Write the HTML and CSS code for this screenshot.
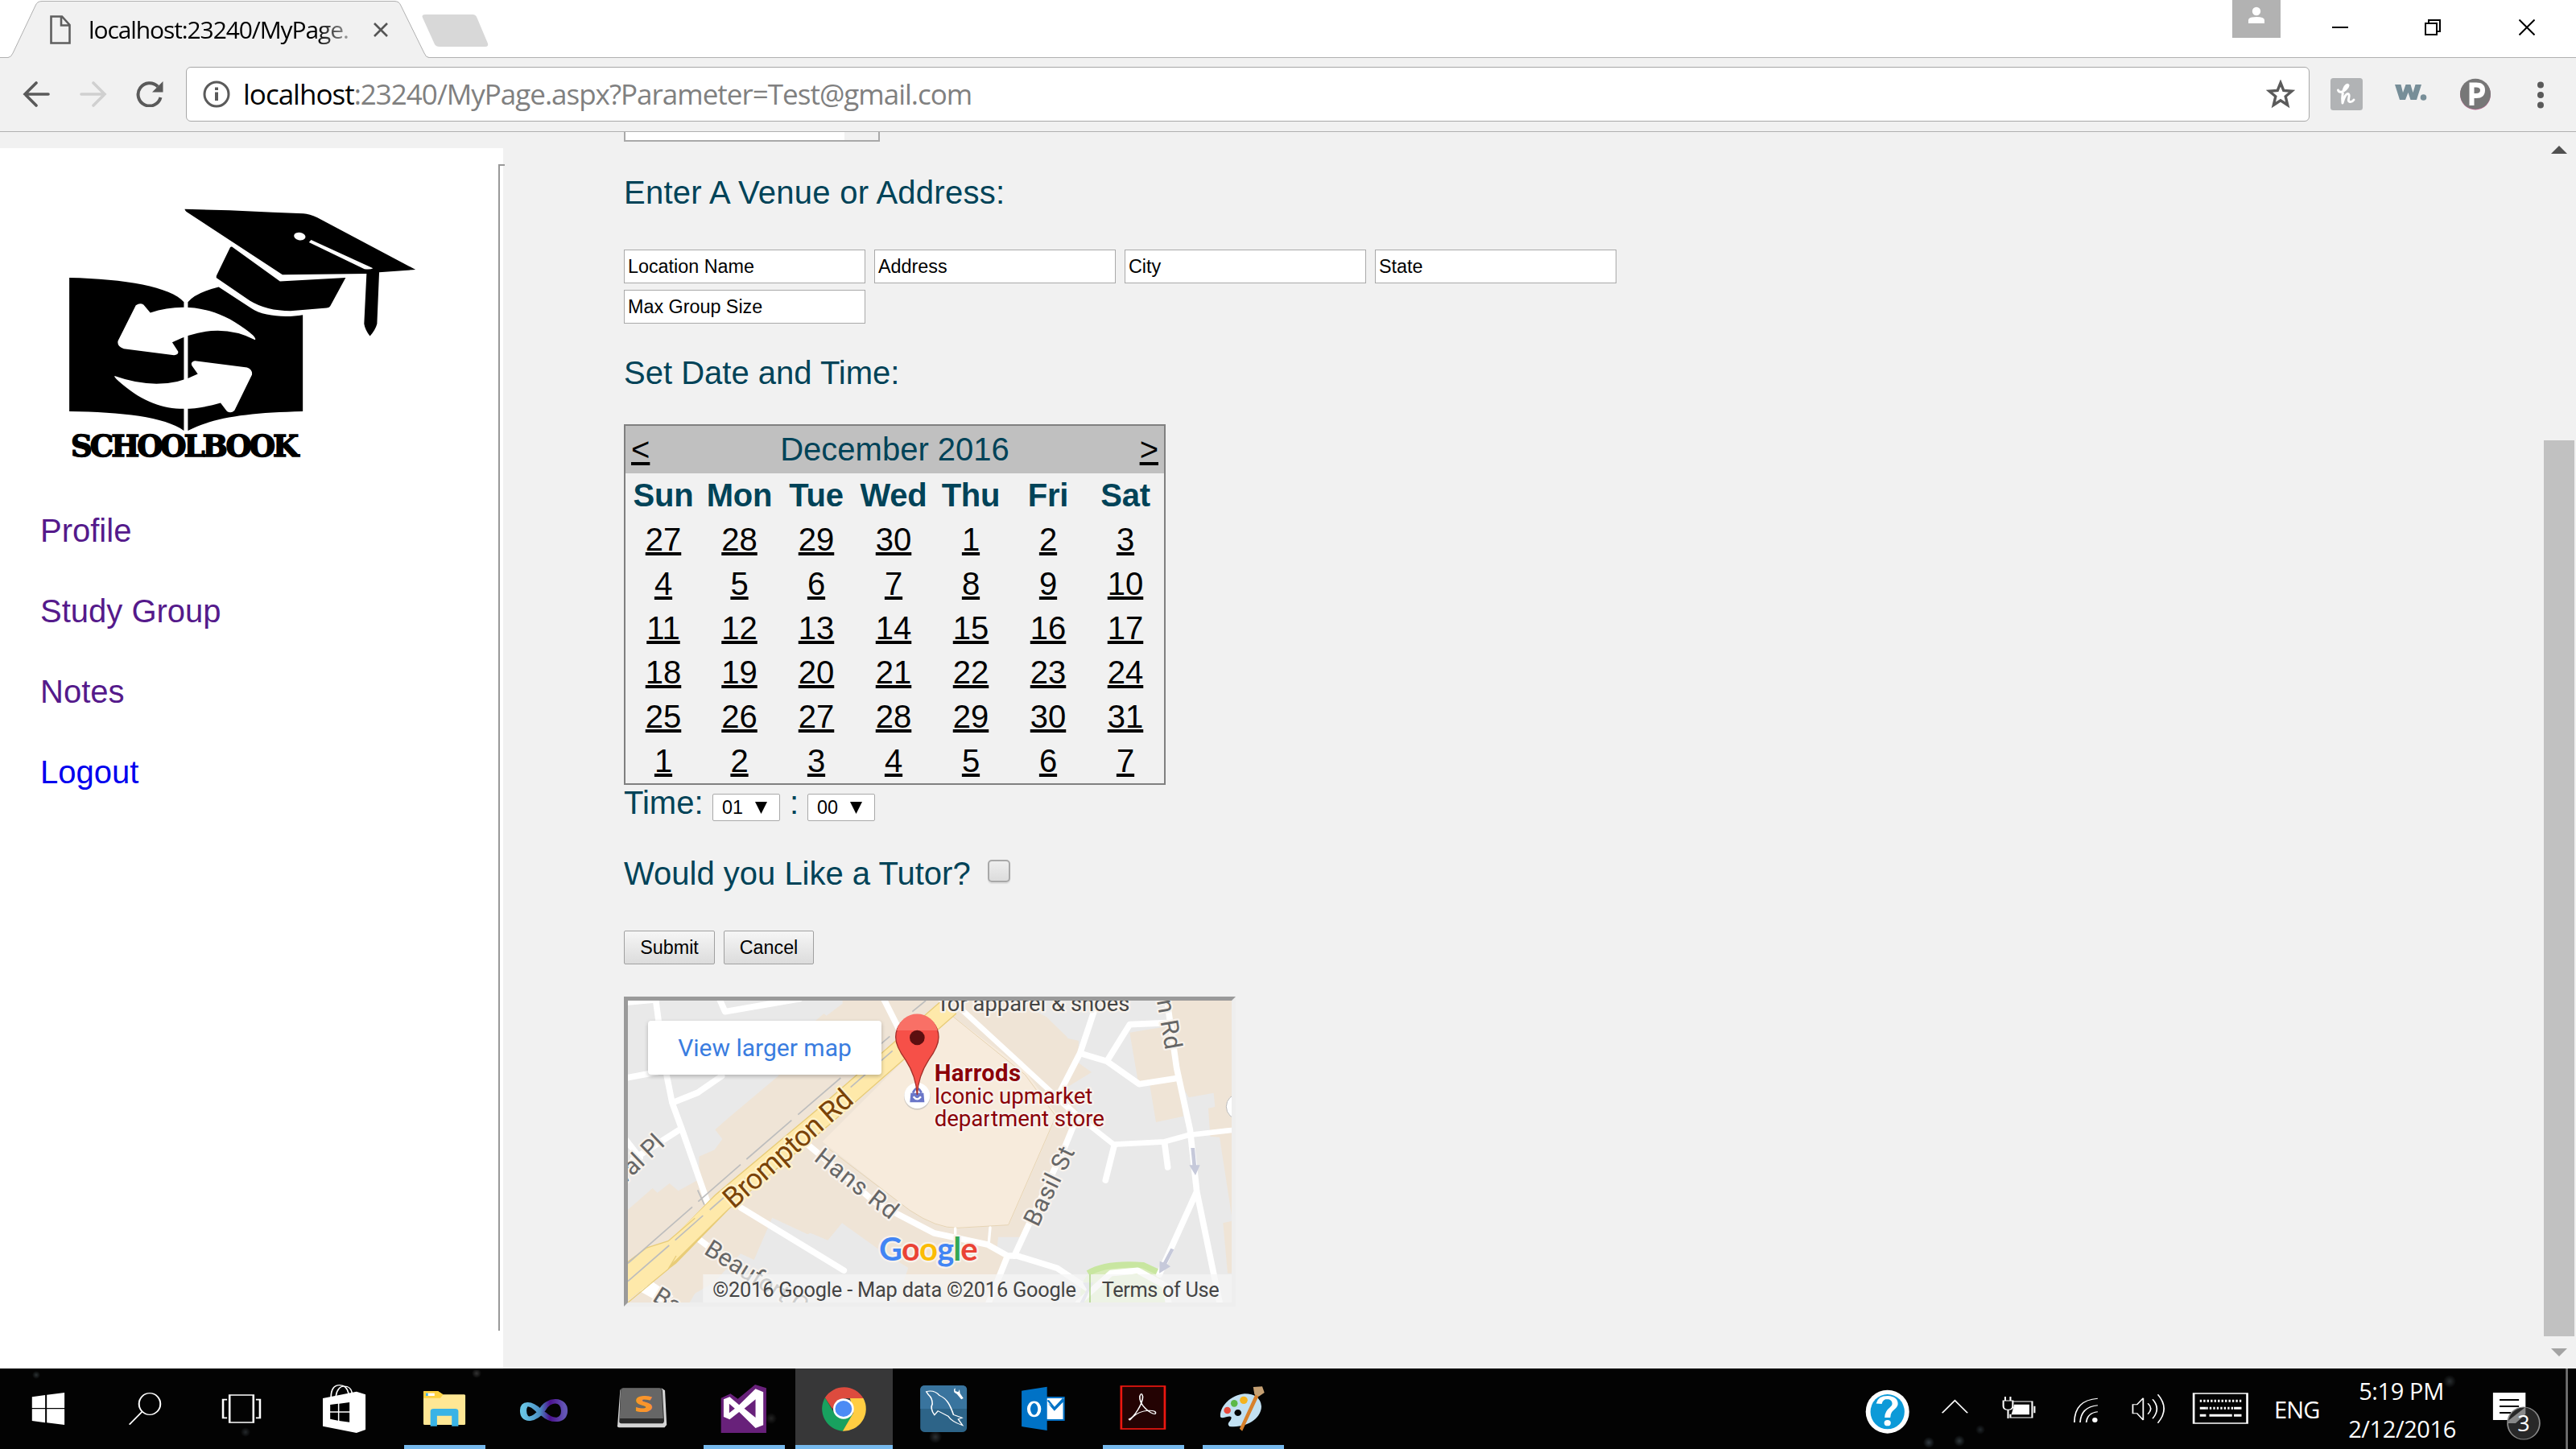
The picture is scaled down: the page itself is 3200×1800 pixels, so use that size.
FILE: index.html
```html
<!DOCTYPE html>
<html lang="en">
<head>
<meta charset="utf-8">
<title>localhost:23240/MyPage.aspx</title>
<link rel="stylesheet" href="styles.css">
</head>
<body>
<header class="tabstrip">
  <div class="tab">
    <svg class="tab-shape" viewBox="0 0 620 72"><path d="M0 71.5H10Q14 71 16 66L44 7Q46 1.500 52 1.500H490Q496 1.500 498 7L527 66Q529 71.500 533 71.500H620V73H0Z" fill="#f1f1f1" stroke="#b0b0b0"/><path d="M529 18H587Q591 18 592.500 22L606 54Q607 58 603 58H546Q541 58 539.500 54L525 22Q523 18 529 18Z" fill="#d8d8d8"/></svg>
    <svg class="tab-doc" viewBox="0 0 26 36"><path d="M1.500 1.500H15L24.500 12V34.500H1.500ZM14 1.500V12.500H24.500" fill="none" stroke="#5f5f5f" stroke-width="2.600"/></svg>
    <span class="tab-title">localhost:23240/MyPage.</span>
    <svg class="tab-close" viewBox="0 0 18 18"><path d="M1 1L17 17M17 1L1 17" stroke="#555" stroke-width="2.600"/></svg>
  </div>
  <div class="window-controls">
    <div class="user"><svg viewBox="0 0 60 47"><circle cx="30" cy="14" r="5.200" fill="#fff"/><path d="M20 29V25Q20 21 30 21T40 25V29Z" fill="#fff"/></svg></div>
    <svg class="ctl ctl-min" viewBox="0 0 20 20"><path d="M0 10H20" stroke="#000" stroke-width="2"/></svg>
    <svg class="ctl ctl-restore" viewBox="0 0 20 20"><path d="M1 5H15V19H1ZM5 5V1H19V15H15" fill="none" stroke="#000" stroke-width="2"/></svg>
    <svg class="ctl" viewBox="0 0 20 20"><path d="M0.500 0.500L19.500 19.500M19.500 0.500L0.500 19.500" stroke="#000" stroke-width="2"/></svg>
  </div>
</header>
<div class="toolbar">
  <svg class="nav back" viewBox="0 0 34 32"><path d="M32 16H3M17 2L3 16L17 30" fill="none" stroke="#5a5a5a" stroke-width="3.600" stroke-linecap="round"/></svg>
  <svg class="nav forward" viewBox="0 0 34 32"><path d="M2 16H31M17 2L31 16L17 30" fill="none" stroke="#d0d0d0" stroke-width="3.600" stroke-linecap="round"/></svg>
  <svg class="nav reload" viewBox="0 0 34 32"><path d="M27 6.500A14.200 14.200 0 1 0 30.500 20" fill="none" stroke="#5a5a5a" stroke-width="4"/><path d="M33.500 0V13.500H20Z" fill="#5a5a5a"/></svg>
  <div class="omnibox">
    <svg class="info" viewBox="0 0 34 34"><circle cx="17" cy="17" r="15" fill="none" stroke="#5a5a5a" stroke-width="3"/><path d="M17 8.500V12M17 14.500V25" stroke="#5a5a5a" stroke-width="4"/></svg>
    <span class="url"><b>localhost</b>:23240/MyPage.aspx?Parameter=Test@gmail.com</span>
    <svg class="star" viewBox="0 0 36 36"><path d="M18 4L21.800 13.500L32 14.200L24.200 20.800L26.700 31.500L18 25.800L9.300 31.500L11.800 20.800L4 14.200L14.200 13.500Z" fill="none" stroke="#5a5a5a" stroke-width="3.400"/></svg>
  </div>
  <svg class="ext honey" viewBox="0 0 40 40"><rect width="40" height="40" rx="3.500" fill="#b1b3b5"/><path d="M9.500 15C11 19 16 17 19 14C23 10 23 7 19.500 9C15 13 14 25 15 31C17 23 20 18 22.500 20C25 22 20 29 24 29.500Q27 30 29 27" fill="none" stroke="#fff" stroke-width="3" stroke-linecap="round" stroke-linejoin="round"/></svg>
  <svg class="ext wiki" viewBox="0 0 40 40"><path d="M0 8H7.500L10 18L13.500 8H19.500L22.500 18L25.500 8H33L27 27H19.500L16.500 18L13 27H6Z" fill="#778e98"/><circle cx="35.500" cy="24" r="3.800" fill="#778e98"/></svg>
  <svg class="ext pin" viewBox="0 0 40 40"><circle cx="20" cy="20.500" r="19" fill="#c16a95"/><circle cx="20" cy="19.800" r="19" fill="#777"/><path d="M15.500 34V8.500H21Q29 8.500 29 15Q29 22 21 22H15.500" fill="none" stroke="#fff" stroke-width="6"/></svg>
  <svg class="menu" viewBox="0 0 10 34"><g fill="#5a5a5a"><circle cx="5" cy="4.500" r="4"/><circle cx="5" cy="17" r="4"/><circle cx="5" cy="29.500" r="4"/></g></svg>
</div>

<div class="page">
  <aside class="sidebar">
    <div class="panel">
      <svg class="logo" viewBox="0 0 1240 1000" preserveAspectRatio="none">
        <g transform="translate(-10 -100)">
          <path d="M495 120L640 125L780 132L880 137Q900 139 925 152L1244 346L1126 356L1119 548Q1114 570 1096 594Q1080 570 1077 548L1085 361L812 365L500 130Q494 124 495 120Z"/>
          <ellipse cx="868" cy="222" rx="19" ry="14" transform="rotate(15 868 222)" fill="#fff"/>
          <path d="M905 235L1106 341Q1098 347 1078 344L898 244Z" fill="#fff"/>
          <path d="M648 261L804 390L1017 376L967 482Q965 488 956 489L838 500Q760 500 706 462L598 377Q596 375 598 368L642 264Q644 260 648 261Z"/>
          <path d="M120 376C300 380 450 410 492 467V947C430 895 290 878 120 875Z"/>
          <path d="M505 467Q530 432 605 411L710 490C750 523 830 525 878 515V875C700 880 590 897 505 947Z"/>
          <path d="M383 507L361 477Q350 468 336 479L278 612Q274 632 297 641L460 665Q476 663 473 651L454 617Q600 535 723 608Q730 600 690 567C590 480 480 470 383 507Z" fill="#fff"/>
          <path d="M611 843L632 875Q645 884 656 872L713 738Q715 718 697 711L528 686Q512 690 518 704L537 735Q420 805 267 743Q264 746 290 772C400 880 500 880 611 843Z" fill="#fff"/>
        </g>
      </svg>
      <div class="wordmark">SCHOOLBOOK</div>
      <nav class="links"><a>Profile</a><a>Study Group</a><a>Notes</a><a class="unvisited">Logout</a></nav>
    </div>
  </aside>
  <main class="content">
    <div class="cut-select"><i></i></div>
    <h2 class="line venue">Enter A Venue or Address:</h2>
    <div class="fields"><div class="field">Location Name</div><div class="field">Address</div><div class="field">City</div><div class="field">State</div><div class="field">Max Group Size</div></div>
    <h2 class="line date">Set Date and Time:</h2>
    <div class="calendar">
      <div class="cal-title"><a>&lt;</a><span>December 2016</span><a>&gt;</a></div>
      <div class="cal-grid">
        <b>Sun</b><b>Mon</b><b>Tue</b><b>Wed</b><b>Thu</b><b>Fri</b><b>Sat</b>
        <a>27</a><a>28</a><a>29</a><a>30</a><a>1</a><a>2</a><a>3</a>
        <a>4</a><a>5</a><a>6</a><a>7</a><a>8</a><a>9</a><a>10</a>
        <a>11</a><a>12</a><a>13</a><a>14</a><a>15</a><a>16</a><a>17</a>
        <a>18</a><a>19</a><a>20</a><a>21</a><a>22</a><a>23</a><a>24</a>
        <a>25</a><a>26</a><a>27</a><a>28</a><a>29</a><a>30</a><a>31</a>
        <a>1</a><a>2</a><a>3</a><a>4</a><a>5</a><a>6</a><a>7</a>
      </div>
    </div>
    <div class="line time"><span class="time-label">Time:</span><div class="select">01<svg viewBox="0 0 15 15"><path d="M0 0H15L7.500 15Z"/></svg></div><span class="colon">:</span><div class="select">00<svg viewBox="0 0 15 15"><path d="M0 0H15L7.500 15Z"/></svg></div></div>
    <div class="line tutor">Would you Like a Tutor?<span class="checkbox"></span></div>
    <div class="buttons"><div class="button submit">Submit</div><div class="button cancel">Cancel</div></div>
    <div class="map">
      <svg class="map-canvas" viewBox="60 69 2250 1125">
        <rect x="60" y="69" width="2250" height="1125" fill="#e9e9e9"/>
        <g fill="#efe4d6">
          <path d="M860 69H1620L1700 210L1740 218L1738 300L1788 336L1700 390L1735 480L1660 690L1530 950H1440L1435 1000L1470 1030L1420 1194H1060L1105 1065L1000 1000L858 898L805 962L740 935L730 940L598 878L530 1035L480 1012L380 1120L310 1160L290 1194H60V848L152 768L170 785L215 750L248 778L325 735V650L383 625L412 585L385 550L430 510L620 350L740 160L790 118L800 125L860 80Z"/>
          <path d="M1930 188L2070 165L2060 69H2310V890L2278 898L2295 1085L2310 1085V870L2265 578L2230 575L2223 470L2248 465L2243 413L2150 430L2110 360L2130 500L2028 522L2005 385L1962 375Z"/>
        </g>
        <path d="M1620 69L1500 69L1620 130L1700 208L1740 218V69Z" fill="#e9e9e9"/>
        <path d="M1255 115L1540 330L1660 495L1480 905L1290 918Q1210 920 1110 850L785 595L1080 300Z" fill="#f7ebdc"/>
        <path d="M1255 115L1540 345L1655 500L1478 905L1290 916Q1210 918 1110 850L800 615" fill="none" stroke="#e6d4b5" stroke-width="3"/>
        <path d="M1750 1194Q1730 1100 1820 1060Q2000 1030 2040 1100Q2070 1150 2062 1194Z" fill="#d8ebb9"/>
        <path d="M1775 1085Q1840 1045 1980 1055L2035 1080" fill="none" stroke="#c8e6a0" stroke-width="22"/>
        <g fill="none" stroke="#fff" stroke-width="23" stroke-linejoin="round" stroke-linecap="round">
          <path d="M163 60L175 150L205 350L225 450L260 545L360 830M60 75L160 66M400 60L422 110L700 62M50 358L170 335M225 450L320 412L410 350M260 545L80 660M50 585L105 655"/>
          <path d="M1012 60L1075 185M480 840L865 1075M320 955L380 1000M735 610L790 655L980 820L1200 935L1400 978L1475 1020L1510 1020L1660 1066L1770 1140M1475 1020L1405 1194"/>
          <path d="M1310 108L1660 430L1750 510L1870 605L2060 595L2150 570L2310 552" stroke-width="20"/>
          <path d="M1800 100L1745 265L1660 430L1735 500L1690 610L1500 1020M1745 265L1845 295L1930 158L2070 152M1845 295L1965 380L2110 358"/>
          <path d="M2068 60L2105 320L2155 550L2180 780L2265 1194M1872 610L1840 738M2060 600L2072 690M2180 780L2040 1090"/>
          <path d="M1740 1194L1860 1085L1960 1075L2060 1130L2075 1194"/>
          <path d="M1280 918V940M1410 915L1405 970" stroke-width="10"/>
        </g>
        <path d="M100 1150L150 1115L230 1170L190 1200Z" fill="#fff"/>
        <path d="M50 1145L215 1020L410 820L780 510L1260 90" fill="none" stroke="#e8cc78" stroke-width="76"/>
        <path d="M50 1145L215 1010L410 820L780 510L1260 90" fill="none" stroke="#fee9aa" stroke-width="68"/>
        <path d="M50 1050L130 990L210 965L310 880L390 860L240 1020L210 1070L50 1194Z" fill="#fee9aa"/>
        <path d="M50 1050L130 990L210 965L310 880M240 1020L210 1070L60 1194" fill="none" stroke="#e8cc78" stroke-width="4"/>
        <path d="M60 1048L300 838M322 818L480 680M502 660L670 515M694 494L853 357M890 392L1046 256M1000 233L1036 202M60 1115L214 981M236 962L340 870M365 849L500 730M1120 110L1170 69M320 775L345 830" fill="none" stroke="#bdbdbd" stroke-width="5"/>
        <g fill="#c6c9da"><path d="M2158 618H2172L2178 682H2192L2175 720L2152 682H2164ZM2083 992L2095 997L2068 1050L2082 1060L2040 1085L2042 1040L2055 1045ZM1755 1120H1795L1780 1148L1760 1194H1745L1770 1145Z"/></g>
        <circle cx="2338" cy="464" r="48" fill="#fff" stroke="#bbb" stroke-width="3"/>
        <g class="halo" font-size="91" fill="#666">
          <text transform="translate(72 730) rotate(-44)" x="-38">val Pl</text>
          <text transform="translate(750 663) rotate(38)" textLength="365">Hans Rd</text>
          <text transform="translate(340 1010) rotate(32)">Beaufort Gardens</text>
          <text transform="translate(148 1186) rotate(32)">Basil</text>
          <text transform="translate(1588 916) rotate(-64)" textLength="316">Basil St</text>
          <text transform="translate(2022 20) rotate(80)" textLength="238">en Rd</text>
        </g>
        <text class="halo yellow" transform="translate(454 848) rotate(-41.500)" font-size="107" fill="#7a4307" textLength="605">Brompton Rd</text>
        <text class="halo" x="1222" y="109" font-size="82" fill="#444" textLength="708">for apparel &amp; shoes</text>
        <g class="halo" fill="#8b0008"><text x="1202" y="370" font-size="88" font-weight="700" textLength="322">Harrods</text><text x="1202" y="454" font-size="83" textLength="590">Iconic upmarket</text><text x="1202" y="536" font-size="83" textLength="634">department store</text></g>
        <circle cx="1138" cy="427" r="49" fill="#aaa" opacity=".5"/><circle cx="1138" cy="423" r="48" fill="#fff"/>
        <path d="M1114 413H1162L1165 448H1111Z" fill="#6a76c8"/><path d="M1122 413Q1138 380 1154 413" fill="none" stroke="#6a76c8" stroke-width="8"/><path d="M1124 427Q1138 445 1152 427" fill="none" stroke="#fff" stroke-width="7"/>
        <path d="M1138 420Q1134 350 1095 290Q1058 240 1058 205A80 81 0 0 1 1218 205Q1218 240 1181 290Q1142 350 1138 420Z" fill="#f65048" stroke="#a5302a" stroke-width="4"/>
        <path d="M1062 180A78 79 0 0 1 1214 180Z" fill="#f97066"/><circle cx="1138" cy="207" r="28" fill="#5c0f10"/>
        <g class="halo google" font-size="120"><text x="996" y="1037" textLength="368"><tspan fill="#4285f4">G</tspan><tspan fill="#ea4335">o</tspan><tspan fill="#fbbc05">o</tspan><tspan fill="#4285f4">g</tspan><tspan fill="#34a853">l</tspan><tspan fill="#ea4335">e</tspan></text></g>
        <rect x="340" y="1089" width="1970" height="105" fill="#f5f5f5" opacity=".72"/><path d="M1782 1089V1194" stroke="#a5cf7c" stroke-width="4"/>
        <g font-size="76" fill="#444"><text x="376" y="1172" textLength="1355">©2016 Google - Map data ©2016 Google</text><text x="1826" y="1172" textLength="438">Terms of Use</text></g>
      </svg>
      <div class="larger">View larger map</div>
    </div>
  </main>
  <div class="scrollbar"><svg viewBox="0 0 20 10"><path d="M0 10L10 0L20 10Z" fill="#505050"/></svg><div class="thumb"></div><svg viewBox="0 0 20 10"><path d="M0 0H20L10 10Z" fill="#a3a3a3"/></svg></div>
</div>

<footer class="taskbar">
  <div class="apps">
    <svg class="w120" viewBox="0 30 235.200 300" preserveAspectRatio="none"><path d="M78 136L110 129V177H78ZM114 128L157 120V177H114ZM78 181H110V232L78 225ZM114 181H157V240L114 232Z" fill="#fff"/></svg>
    <svg class="w120" viewBox="235.200 30 235.200 300" preserveAspectRatio="none"><g fill="none" stroke="#fff" stroke-width="4"><ellipse cx="364.500" cy="162" rx="26" ry="40"/><path d="M346 191L315 239"/></g></svg>
    <svg class="w126" viewBox="470.400 30 247 300" preserveAspectRatio="none"><path d="M559 129H617V231H559ZM553 146H543V214H553M623 146H633V214H623" fill="none" stroke="#fff" stroke-width="5"/></svg>
    <svg viewBox="717.400 30 243 300" preserveAspectRatio="none"><path d="M786 141L868 116L890 127V258L868 270L786 245Z" fill="#fff"/><path d="M806 138Q806 92 827 92Q844 92 849 124M818 132Q822 96 838 96Q854 96 857 120" fill="none" stroke="#fff" stroke-width="3.500"/><path d="M804 165L823 161V190H804ZM826 161L851 156V190H826ZM804 194H823V224L804 218ZM826 194H851V230L826 225Z" fill="#000"/></svg>
    <svg class="open" viewBox="960.400 30 243 300" preserveAspectRatio="none"><path d="M1031 116Q1031 114 1034 114H1066L1078 127H1131L1133 130V236Q1133 240 1130 240H1034Q1031 240 1031 236Z" fill="#ffe794"/><path d="M1031 118Q1031 114 1035 114H1066L1079 127L1072 140H1031Z" fill="#fdd13f"/><path d="M1037 122H1058V132H1037Z" fill="#fff"/><path d="M1037 122H1042V132H1037Z" fill="#39b3e6"/><path d="M1048 245V190Q1048 180 1056 180H1108Q1116 180 1116 190V245H1100V206H1064V245Z" fill="#39b3e6"/></svg>
    <svg viewBox="1203.400 30 243 300" preserveAspectRatio="none"><defs><linearGradient id="inf"><stop offset="0" stop-color="#68c4e4"/><stop offset=".4" stop-color="#4b8fc4"/><stop offset=".65" stop-color="#4c118f"/><stop offset="1" stop-color="#6355b5"/></linearGradient></defs><path d="M1312 187C1290 155 1274 158 1274 187C1274 231 1302 223 1320 185C1335 140 1374 142 1374 187C1374 228 1345 230 1323 199Q1317 193 1312 187Z" fill="none" stroke="url(#inf)" stroke-width="16"/></svg>
    <svg viewBox="-78.400 30 231.500 300" preserveAspectRatio="none"><g transform="translate(3 0)"><path d="M-21 110L-17 104H76L83 112L87 240L82 250H-24Q-29 248-27 240Z" fill="#d5d5d5"/><path d="M-20 106Q-18 103-13 103H70Q76 104 77 110L81 224Q81 235 75 235H-18Q-24 234-23 226Z" fill="#2a2a2a"/><path d="M-19 108L-14 103H70L75 108L79 216H-22Z" fill="#666"/><text class="sublime" x="12" y="192" font-size="86" fill="#f9952b" textLength="43" lengthAdjust="spacingAndGlyphs">S</text></g></svg>
    <svg class="open" viewBox="153.100 30 231.500 300" preserveAspectRatio="none"><path d="M216 140L238 124L255 143L295 90L321 103V270H216Z" fill="#68217a"/><path d="M222 145L236 136L258 166L296 106L314 118V241L296 252L258 192L236 220L222 210ZM235 161V196L248 179ZM296 145L270 179L296 213Z" fill="#fff" fill-rule="evenodd"/></svg>
    <svg class="open active" viewBox="384.500 30 231.500 300" preserveAspectRatio="none"><path d="M457 139A52 83 0 0 1 546 141H501L474 180Z" fill="#dd4b3e"/><path d="M457 139A52 83 0 0 0 498 263L522 201L478 195Z" fill="#18a15f"/><path d="M546 141A52 83 0 0 1 498 263L523 195L515 141Z" fill="#ffcd42"/><ellipse cx="500" cy="180" rx="24" ry="38" fill="#fff"/><ellipse cx="500" cy="180" rx="19.500" ry="30" fill="#4c8bf5"/></svg>
    <svg viewBox="616 30 231.500 300" preserveAspectRatio="none"><rect x="678" y="93" width="108" height="174" rx="11" ry="16" fill="#2d6488"/><path d="M678 180V109Q678 93 690 93H774Q786 93 786 109V180Z" fill="#39749e"/><path d="M692 116Q710 108 723 131C741 143 748 170 755 202L775 214L766 219L776 242Q750 227 743 208L719 188L711 203Q700 180 706 162Q706 140 697 128Z" fill="none" stroke="#fff" stroke-width="3"/><path d="M759 103Q754 108 757 119L763 125L773 145L778 141L770 122L769 108L766 118L759 114Z" fill="#fff"/></svg>
    <svg viewBox="847.500 30 231.500 300" preserveAspectRatio="none"><path d="M971 135H1013V225H971Z" fill="#0072c6"/><path d="M971 141H1012L989 178L974 160L989 188L1009 155V219H971Z" fill="#fff"/><path d="M974 148L989 178L1010 142" fill="none" stroke="#0072c6" stroke-width="5"/><path d="M913 113L972 98V261L913 246Z" fill="#0072c6"/><ellipse cx="942" cy="181" rx="12.500" ry="26" fill="none" stroke="#fff" stroke-width="7.500"/></svg>
    <svg class="open" viewBox="1079 30 231.500 300" preserveAspectRatio="none"><rect x="1144" y="96" width="101" height="159" fill="#240303" stroke="#ed1710" stroke-width="5"/><path d="M1162 219C1175 211 1194 160 1194 135Q1191 115 1187 134C1185 165 1213 203 1223 199C1230 180 1188 183 1173 208C1162 224 1165 224 1162 219Z" fill="none" stroke="#fff" stroke-width="3"/></svg>
    <svg class="open" viewBox="1310.400 30 231.500 300" preserveAspectRatio="none"><path d="M1430 124C1395 130 1371 175 1374 211C1380 220 1394 202 1399 211C1401 226 1386 232 1395 246C1440 253 1470 210 1469 170Q1466 125 1430 124ZM1415 183A8 12 0 1 1 1414 183Z" fill="#c2e0f1" fill-rule="evenodd"/><ellipse cx="1390" cy="186" rx="8" ry="13" fill="#e8493c"/><ellipse cx="1406" cy="160" rx="8" ry="13" fill="#5cb947"/><ellipse cx="1428" cy="148" rx="9" ry="14" fill="#f5b31d"/><path d="M1456 128L1461 133L1424 260L1420 254Z" fill="#d8812c" stroke="#d8812c" stroke-width="3"/><path d="M1450 99L1471 97L1476 120L1463 134L1453 127Z" fill="#c5a073"/></svg>
  </div>
  <div class="tray">
    <svg class="t-help" viewBox="40 180 160 300" preserveAspectRatio="none"><ellipse cx="111" cy="341" rx="46" ry="81" fill="#fff"/><ellipse cx="111" cy="341" rx="36" ry="65" fill="#0c9ad8"/><path d="M93 311Q96 288 111 288Q127 290 127 312C127 330 111 330 111 363" fill="none" stroke="#fff" stroke-width="12"/><ellipse cx="111" cy="383" rx="7" ry="11" fill="#fff"/></svg>
    <svg class="t-up" viewBox="200 180 110 300" preserveAspectRatio="none"><path d="M227 346L254 299L281 346" fill="none" stroke="#fff" stroke-width="3.500"/></svg>
    <svg class="t-bat" viewBox="310 180 160 300" preserveAspectRatio="none"><path d="M376 303H418V363H372V350M423 320V346M361 285V299M372 285V299M357 300H377V320Q377 333 367 334Q357 333 357 320ZM367 334V366" fill="none" stroke="#fff" stroke-width="3.500"/><path d="M380 314H412V352H374Z" fill="#fff"/></svg>
    <svg class="t-wifi" viewBox="470 180 120 300" preserveAspectRatio="none"><path d="M507 381Q507 298 556 292M519 381Q521 322 556 317M532 381Q534 345 556 341" fill="none" stroke="#fff" stroke-width="3"/><ellipse cx="550" cy="372" rx="5.500" ry="9" fill="#fff"/></svg>
    <svg class="t-vol" viewBox="590 180 145 300" preserveAspectRatio="none"><path d="M630 314H639L652 290V372L639 347H630ZM662 310Q674 330 662 350M672 295Q690 330 672 367M683 277Q709 330 683 383" fill="none" stroke="#fff" stroke-width="3"/></svg>
    <svg class="t-key" viewBox="735 180 165 300" preserveAspectRatio="none"><rect x="759" y="273" width="113" height="111" fill="none" stroke="#fff" stroke-width="4.500"/><path d="M772 301H860" stroke="#fff" stroke-width="9" stroke-dasharray="4 3.600"/><path d="M785 328H845" stroke="#fff" stroke-width="9" stroke-dasharray="4 3.600"/><path d="M772 328H785M844 328H860M772 355H785M792 355H840M844 355H860" stroke="#fff" stroke-width="9"/></svg>
    <span class="lang">ENG</span>
    <div class="clock"><span>5:19 PM</span><span class="day">2/12/2016</span></div>
    <svg class="t-note" viewBox="1370 180 198 300" preserveAspectRatio="none"><path d="M1392 270H1461V372H1440L1426 395V372H1392Z" fill="#fff"/><path d="M1406 297H1447M1406 321H1447M1406 345H1430" stroke="#000" stroke-width="6"/><ellipse cx="1457" cy="384" rx="34" ry="60" fill="#282828" stroke="#8a8a8a" stroke-width="3"/><path d="M1426 372L1461 324V350L1440 384H1424Z" fill="#888"/><text x="0" y="0" transform="translate(1444 413) scale(1 1.760)" font-size="46" fill="#fff">3</text><path d="M1548.500 180V480" stroke="#777" stroke-width="4.500"/></svg>
  </div>
</footer>
</body>
</html>
```
FILE: styles.css
```css
* { box-sizing: border-box; }
body { margin: 0; width: 3200px; height: 1800px; overflow: hidden; display: flex; flex-direction: column; background: #f1f1f1; font-family: "Liberation Sans", Arial, sans-serif; }
svg { display: block; flex: none; }

.tabstrip { height: 72px; flex: none; background: #fff; border-bottom: 1px solid #b0b0b0; display: flex; justify-content: space-between; }
.tab { position: relative; width: 620px; height: 72px; display: flex; align-items: flex-start; }
.tab-shape { position: absolute; left: 0; top: 0; width: 620px; height: 72px; }
.tab-doc { position: relative; width: 26px; height: 36px; margin: 19px 22px 0 62px; }
.tab-title { position: relative; width: 345px; margin-top: 16px; font: 30px/41px "Open Sans", "Noto Sans", sans-serif; letter-spacing: -1.1px; white-space: nowrap; background: linear-gradient(90deg, #000 82%, #ccc 97%); -webkit-background-clip: text; background-clip: text; color: transparent; }
.tab-close { position: relative; width: 18px; height: 18px; margin: 28px 0 0 9px; }
.window-controls { display: flex; padding-right: 51px; }
.user { width: 60px; height: 47px; background: #b2b2b2; margin-right: 64px; }
.ctl { width: 20px; height: 20px; margin-top: 24px; }
.ctl-min { margin-right: 95px; }
.ctl-restore { margin-right: 97px; }

.toolbar { height: 92px; flex: none; display: flex; align-items: flex-start; background: #f1f1f1; border-bottom: 1px solid #b0b0b0; }
.nav { width: 34px; height: 32px; margin-top: 29px; }
.back { margin-left: 28px; }
.forward { margin-left: 37px; }
.reload { margin-left: 36px; }
.omnibox { width: 2638px; height: 68px; margin: 11px 26px 0 28px; border: 1px solid #a8a8a8; border-radius: 6px; background: #fff; display: flex; align-items: center; padding: 0 17px 0 20px; }
.info { width: 34px; height: 34px; margin-right: 16px; }
.url { flex: 1; font: 35px/46px "Open Sans", "Noto Sans", sans-serif; letter-spacing: -1px; color: #808080; white-space: nowrap; }
.url b { font-weight: 400; color: #000; }
.star { width: 36px; height: 36px; }
.ext { width: 40px; height: 40px; margin: 25px 40px 0 0; }
.pin { margin-right: 56px; }
.menu { width: 10px; height: 34px; margin-top: 29px; }

.page { height: 1536px; flex: none; display: flex; background: #f1f1f1; overflow: hidden; }
.sidebar { width: 625px; margin-top: 20px; background: #fff; padding-top: 20px; }
.panel { width: 625px; height: 1447px; position: relative; }
.panel::after { content: ""; position: absolute; left: 619px; top: 0; width: 6px; height: 1447px; border: 2px solid #999; border-right: 0; border-bottom: 0; }
.logo { width: 474.500px; height: 333px; margin-left: 44px; position: relative; top: 49px; }
.wordmark { margin: -5px 0 0 88px; width: 290px; font: 700 37px/44px "DejaVu Serif", serif; letter-spacing: -3px; -webkit-text-stroke: 1.5px #000; }
.links { display: flex; flex-direction: column; gap: 54px; padding: 60px 0 0 50px; font-size: 40px; line-height: 46px; color: #551a8b; }
.unvisited { color: #0000ee; }

.content { flex: 1; padding-left: 150px; color: #004358; }
.cut-select { width: 318px; height: 12px; background: #fff; border: 2px solid #a9a9a9; border-top: 0; display: flex; justify-content: flex-end; }
.cut-select i { width: 42px; background: #f1f1f1; }
.line { margin: 0; height: 46px; font-size: 40px; line-height: 46px; font-weight: 400; white-space: nowrap; }
.venue { margin-top: 40px; letter-spacing: 0.25px; }
.fields { width: 1240px; margin-top: 48px; display: flex; flex-wrap: wrap; gap: 8px 11px; }
.field { width: 300px; height: 42px; border: 1px solid #a9a9a9; background: #fff; color: #000; font-size: 23.330px; line-height: 40px; padding-left: 4px; }
.date { margin-top: 38px; }
.calendar { width: 673px; height: 448px; margin-top: 41px; border: 2px solid #808080; }
.cal-title { height: 59px; background: #c0c0c0; display: flex; justify-content: space-between; font-size: 40px; line-height: 59px; padding: 0 7px; }
.calendar a { color: #000; text-decoration: underline; text-decoration-thickness: 4px; text-underline-offset: 2px; }
.cal-grid { display: grid; grid-template-columns: 94px 95px 96px 96px 96px 96px 96px; grid-auto-rows: 55px; text-align: center; font-size: 40px; line-height: 55px; }
.cal-grid b { letter-spacing: -0.2px; }
.time { display: flex; align-items: flex-start; margin-top: -1px; }
.time-label { width: 110px; }
.colon { width: 34px; padding-left: 12px; }
.select { width: 84px; height: 34px; margin-top: 12px; border: 1px solid #a9a9a9; border-radius: 2px; background: #fff; color: #000; font-size: 23.330px; line-height: 32px; padding: 0 15px 0 11px; display: flex; justify-content: space-between; align-items: center; }
.select svg { width: 15px; height: 15px; }
.tutor { margin-top: 42px; display: flex; }
.checkbox { width: 28px; height: 28px; margin: 6px 0 0 21px; border: 2px solid #a8a8a8; border-radius: 5px; background: linear-gradient(#eee, #dcdcdc); box-shadow: 0 2px 1px #ddd; }
.buttons { display: flex; gap: 11px; margin-top: 48px; }
.button { height: 42px; border: 1px solid #a0a0a0; border-radius: 2px; background: linear-gradient(#f6f6f6, #dcdcdc); color: #000; font-size: 23.330px; line-height: 40px; text-align: center; }
.submit { width: 113px; }
.cancel { width: 112px; }
.map { position: relative; width: 760px; height: 385px; margin-top: 40px; border: 5px solid; border-color: #9a9a9a #eee #eee #9a9a9a; overflow: hidden; }
.map-canvas { width: 750px; height: 375px; font-family: Roboto, sans-serif; }
.halo { paint-order: stroke; stroke: #f7f2ec; stroke-width: 14px; stroke-linejoin: round; }
.yellow { stroke: #fff2c8; }
.google { font-family: Lato, sans-serif; font-weight: 700; }
.larger { position: absolute; left: 25px; top: 25px; width: 290px; height: 67px; border-radius: 4px; background: #fff; box-shadow: 0 2px 5px rgba(0, 0, 0, .25); color: #3a7de0; font: 30px/67px Roboto, sans-serif; text-align: center; }

.scrollbar { width: 40px; display: flex; flex-direction: column; align-items: center; padding-top: 17px; }
.scrollbar svg { width: 20px; height: 10px; margin-right: 2px; }
.thumb { width: 38px; height: 1113px; margin: 356px 2px 15px 0; background: #c1c1c1; flex: none; }

.taskbar { height: 100px; flex: none; display: flex; justify-content: space-between; background: radial-gradient(circle at 45px 8px, #2b3133 0, transparent 5px), radial-gradient(circle at 305px 79px, #25292c 0, transparent 6px), radial-gradient(circle at 592px 6px, #333 0, transparent 6px), radial-gradient(circle at 1162px 85px, #2c3033 0, transparent 8px), radial-gradient(circle at 958px 62px, #252525 0, transparent 7px), radial-gradient(circle at 2396px 92px, #333b42 0, transparent 7px), radial-gradient(circle at 2434px 90px, #30383c 0, transparent 7px), radial-gradient(circle at 2460px 76px, #22282c 0, transparent 6px), radial-gradient(circle at 3043px 16px, #2b3032 0, transparent 8px), #030303; color: #fff; }
.apps, .tray { display: flex; }
.apps svg { width: 124px; height: 100px; }
.apps .w120 { width: 120px; }
.apps .w126 { width: 126px; }
.apps .open { background: linear-gradient(#76b9ed, #76b9ed) 12px 95px / 101px 5px no-repeat; }
.apps .active { background: linear-gradient(#76b9ed, #76b9ed) 2px 95px / 121px 5px no-repeat, linear-gradient(#373738, #373738) 2px 0 / 121px 95px no-repeat; }
.sublime { font-family: "Open Sans", sans-serif; font-weight: 800; }
.tray svg { height: 100px; }
.tray .t-help { width: 94px; }
.tray .t-up { width: 64px; }
.tray .t-bat { width: 94px; }
.tray .t-wifi { width: 71px; }
.tray .t-vol { width: 85px; }
.tray .t-key { width: 97px; }
.tray .t-note { width: 116px; }
.lang, .clock { font: 29px/46px "Open Sans", "Noto Sans", sans-serif; letter-spacing: -1px; white-space: nowrap; }
.lang { width: 88px; padding: 28px 0 0 17px; letter-spacing: -0.8px; }
.clock { width: 188px; display: flex; flex-direction: column; align-items: center; padding: 4px 14px 0 0; letter-spacing: -0.4px; }
.clock span { line-height: 47px; }
.clock .day { margin-left: 2px; }
.tray text { font-family: "Open Sans", sans-serif; }
```
